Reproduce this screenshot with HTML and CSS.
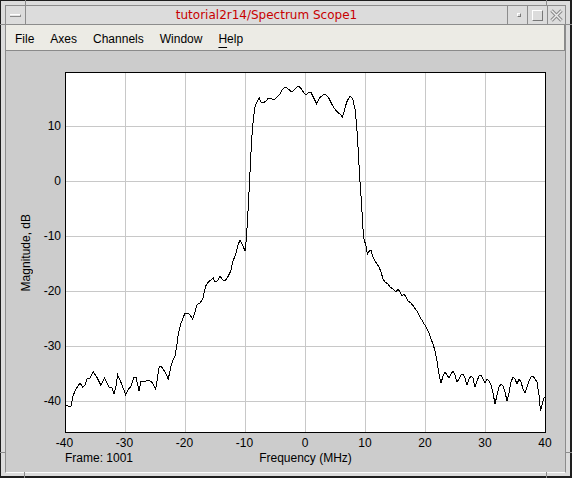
FILE: index.html
```html
<!DOCTYPE html>
<html>
<head>
<meta charset="utf-8">
<title>tutorial2r14/Spectrum Scope1</title>
<link rel="stylesheet" href="styles.css">
</head>
<body>
<!-- Scope window -->
<div class="window">
  <div class="frame">
    <div class="titlebar">
      <div class="tb-box"><span class="ico-bar"></span></div>
      <div class="tb-title">tutorial2r14/Spectrum Scope1</div>
      <div class="tb-btn"><span class="ico-min"></span></div>
      <div class="tb-btn"><span class="ico-max"></span></div>
      <div class="tb-btn tb-close">
        <svg width="13" height="13" viewBox="0 0 13 13">
          <path d="M1.5 1.5 L11.5 11.5 M11.5 1.5 L1.5 11.5" stroke="#8a8a8a" stroke-width="3.4" fill="none"/>
          <path d="M1.5 1.5 L11.5 11.5 M11.5 1.5 L1.5 11.5" stroke="#ececec" stroke-width="1.4" fill="none"/>
        </svg>
      </div>
    </div>

    <div class="menubar">
      <span>File</span>
      <span>Axes</span>
      <span>Channels</span>
      <span>Window</span>
      <span><u>H</u>elp</span>
    </div>

    <!-- Plot area -->
    <div class="content">
      <div class="ylabel"><span>Magnitude, dB</span></div>
      <svg class="chart" width="529" height="400" viewBox="36 52 529 400" shape-rendering="crispEdges">
        <rect x="65.5" y="73.5" width="480" height="360" fill="#fff"/>
        <g stroke="#c8c8c8" stroke-width="1">
          <line x1="125.5" y1="74" x2="125.5" y2="433"/>
          <line x1="185.5" y1="74" x2="185.5" y2="433"/>
          <line x1="245.5" y1="74" x2="245.5" y2="433"/>
          <line x1="305.5" y1="74" x2="305.5" y2="433"/>
          <line x1="365.5" y1="74" x2="365.5" y2="433"/>
          <line x1="425.5" y1="74" x2="425.5" y2="433"/>
          <line x1="485.5" y1="74" x2="485.5" y2="433"/>
          <line x1="66" y1="127.5" x2="545" y2="127.5"/>
          <line x1="66" y1="182.5" x2="545" y2="182.5"/>
          <line x1="66" y1="237.5" x2="545" y2="237.5"/>
          <line x1="66" y1="292.5" x2="545" y2="292.5"/>
          <line x1="66" y1="347.5" x2="545" y2="347.5"/>
          <line x1="66" y1="402.5" x2="545" y2="402.5"/>
        </g>
        <polyline fill="none" stroke="#000" stroke-width="1" points="65.5,406 68,407 71,407 72.7,398 75,392 78,387 80,384 82.7,388 85,386 87,380 90,379 93.3,373 96.7,378 100.7,386 102.5,383 104.3,379 106.7,383 109,388 111.7,388 114,395 116,387 117.7,376 121.7,385 125.7,396 128.3,390 130.7,388 134,378 136,378 139,392 141,382 143.3,383 146,382 148.3,381 151.7,383 155.7,390 159.3,367 161.7,368 165,373 168.3,380 171,367 173.3,360 175,357 176.7,347 178.3,335 180.7,325 185,314 188.3,314 190,316 192.7,320 195,313 196.7,306 200,304 202.7,300 205.7,287 208.3,283 213.3,279 215,283 217.3,282 220,277 222.7,281 225,282 228.3,277 230.7,272 232.7,263 236,254 237.7,247 240,241 242.7,246 245,252 246,243 247.3,225 248.3,207 250,173 251.7,140 253.3,120 255,108 257.3,102 259.3,99 261,103 263.3,104 266,102 268.3,99 271.7,100 275,100 277.3,98 280,95 282.7,90 286,88 288.3,90 291.7,93 295,90 298.3,87 300.7,89 303.3,93 306,96 308.3,94 310.7,93 313.3,98 316.7,105 319.3,99 321.7,97 325,95 328.3,98 331.7,105 334,109 337.3,113 340,115 342.3,118 344,113 346.7,103 350,97 352.7,100 355,110 356.7,127 358.3,153 360,183 361.7,207 362.7,227 364,240 366,247 367.3,255 369.3,252 371,251 372.7,257 375,262 377,265 379,268 381,273 383,280 385,283 388,285 390,288 393,290 396,293 398,290 400,293 402,297 404,295 406,298 408,302 411,304 414,308 417,312 420,318 423,323 426,328 429,334 431,340 433,345 435,352 437,362 438.5,372 440,380 441,384 443,377 445,373 447,376 449,379 451,375 453,372 455,376 457,383 459,380 461,376 463,375 465,379 467,386 469,380 471,377 473,379 475,388 477,382 479,377 481,376 483,380 485,384 487,380 489,382 491,386 493,394 495,405 497,396 499,388 501,385 503,387 505,393 507,402 509,394 511,383 513,378 515,380 517,385 519,380 521,383 523,390 525,394 527,388 529,382 531,378 533,377 535,380 537,383 539,396 540.5,412 542,406 543.5,400 545,398"/>
        <rect x="65.5" y="73.5" width="480" height="360" fill="none" stroke="#000" stroke-width="1"/>
        <g class="ticks" text-anchor="end">
          <text x="61" y="131">10</text>
          <text x="61" y="186">0</text>
          <text x="61" y="241">-10</text>
          <text x="61" y="296">-20</text>
          <text x="61" y="351">-30</text>
          <text x="61" y="406">-40</text>
        </g>
        <g class="ticks" text-anchor="middle">
          <text x="64.5" y="448">-40</text>
          <text x="124.5" y="448">-30</text>
          <text x="184.5" y="448">-20</text>
          <text x="244.5" y="448">-10</text>
          <text x="305" y="448">0</text>
          <text x="365" y="448">10</text>
          <text x="425" y="448">20</text>
          <text x="485" y="448">30</text>
          <text x="545" y="448">40</text>
        </g>
      </svg>
      <div class="xfoot">
        <span class="frame-no">Frame: 1001</span>
        <span class="xlabel">Frequency (MHz)</span>
        <span></span>
      </div>
    </div>
  </div>

  <!-- resize grips on the window frame -->
  <span class="grip grip-top grip-tl"></span>
  <span class="grip grip-top grip-tr"></span>
  <span class="grip grip-side grip-lt"></span>
  <span class="grip grip-side grip-rt"></span>
  <span class="grip grip-side grip-lb"></span>
  <span class="grip grip-side grip-rb"></span>
  <span class="grip grip-bot grip-bl"></span>
  <span class="grip grip-bot grip-br"></span>
</div>
</body>
</html>
```

FILE: styles.css
```css
body {
  margin: 0;
  background: #dcdcdc;
  font-family: "Liberation Sans", Arial, sans-serif;
  font-size: 12px;
  color: #000;
}

/* Window frame */
.window {
  position: relative;
  width: 572px;
  height: 478px;
  box-sizing: border-box;
  background: #dcdcdc;
  border-top: 1px solid #1e1e1e;
  border-left: 1px solid #1e1e1e;
  border-right: 2px solid #1e1e1e;
  border-bottom: 2px solid #1e1e1e;
  padding: 4px 4px 3px 4px;
}

.frame {
  height: 100%;
  box-sizing: border-box;
  border: 1px solid #8c8c8c;
  border-bottom-color: #fbfbfb;
  display: flex;
  flex-direction: column;
}

.grip {
  position: absolute;
  background: #8c8c8c;
}
.grip-top { top: -1px; width: 1px; height: 6px; }
.grip-tl { left: 24px; }
.grip-tr { left: 545px; }
.grip-side { width: 6px; height: 1px; }
.grip-lt { left: -1px; top: 23px; }
.grip-rt { right: -2px; top: 23px; }
.grip-lb { left: -1px; top: 451px; }
.grip-rb { right: -2px; top: 451px; }
.grip-bot { bottom: -2px; width: 1px; height: 6px; }
.grip-bl { left: 23px; }
.grip-br { left: 545px; }

/* Title bar */
.titlebar {
  display: flex;
  height: 18px;
  border-bottom: 1px solid #8c8c8c;
  background: #dcdcdc;
}

.tb-box {
  width: 19px;
  border-right: 1px solid #8c8c8c;
  display: flex;
  align-items: center;
  justify-content: center;
}

.ico-bar {
  width: 11px;
  height: 3px;
  box-sizing: border-box;
  background: #e4e4e4;
  border-top: 1px solid #fff;
  border-bottom: 1px solid #8a8a8a;
  border-right: 1px solid #8a8a8a;
}

.tb-title {
  flex: 1;
  display: flex;
  align-items: center;
  justify-content: center;
  font-family: "DejaVu Sans", sans-serif;
  font-size: 12px;
  line-height: 14px;
  color: #c80000;
}

.tb-btn {
  width: 19px;
  border-left: 1px solid #8c8c8c;
  display: flex;
  align-items: center;
  justify-content: center;
}

.tb-close {
  width: 17px;
}

.ico-min {
  width: 4px;
  height: 4px;
  box-sizing: border-box;
  border: 1px solid #777;
  border-top-color: #fff;
  border-left-color: #fff;
  background: #dcdcdc;
  margin-left: 2px;
}

.ico-max {
  width: 11px;
  height: 11px;
  box-sizing: border-box;
  border: 1px solid #777;
  border-top-color: #fff;
  border-left-color: #fff;
}

/* Menu bar */
.menubar {
  display: flex;
  gap: 16px;
  height: 26px;
  box-sizing: border-box;
  padding: 7px 0 0 9px;
  background: #ecebe5;
  border-bottom: 1px solid #8a8a8a;
  border-right: 1px solid #8a8a8a;
  line-height: 14px;
}

.menubar u {
  text-decoration: underline;
  text-underline-offset: 4px;
}

/* Plot area */
.content {
  flex: 1;
  background: #cccccc;
  display: grid;
  grid-template-columns: 30px 529px;
  grid-template-rows: 400px 14px;
  align-content: start;
}

.ylabel {
  margin-top: 21px;
  height: 361px;
  padding-left: 13px;
  display: flex;
  align-items: center;
}

.ylabel span {
  writing-mode: vertical-rl;
  transform: rotate(180deg);
  line-height: 14px;
  white-space: nowrap;
}

.chart {
  display: block;
}

.ticks text {
  font-family: "Liberation Sans", Arial, sans-serif;
  font-size: 12px;
  fill: #000;
}

.xfoot {
  grid-column: 2;
  margin-left: 29px;
  width: 481px;
  display: grid;
  grid-template-columns: 1fr auto 1fr;
  line-height: 14px;
  white-space: nowrap;
}
```
